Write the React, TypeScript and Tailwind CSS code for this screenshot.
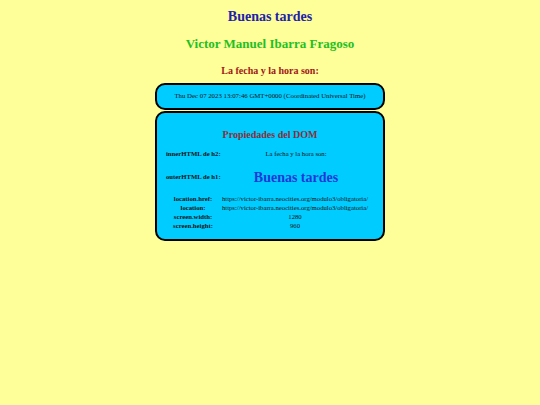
export default function App() {
  const rows = [
    ["location.href:", "https://victor-ibarra.neocities.org/modulo3/obligatoria/"],
    ["location:", "https://victor-ibarra.neocities.org/modulo3/obligatoria/"],
    ["screen.width:", "1280"],
    ["screen.height:", "960"],
  ];

  return (
    <div className="min-h-[405px] w-full bg-[#ffff99] flex flex-col items-center pt-[9px] text-[#111] font-['Liberation_Serif',serif]">
      <h1 className="text-[14px] leading-[16px] font-bold text-[#2222aa]">Buenas tardes</h1>
      <h2 className="mt-[11px] text-[13px] leading-[16px] font-bold text-[#22c022]">
        Victor Manuel Ibarra Fragoso
      </h2>
      <h3 className="mt-[13px] text-[10px] leading-[12px] font-bold text-[#a01818]">
        La fecha y la hora son:
      </h3>

      <div className="mt-[6px] w-[230px] h-[27px] rounded-[10px] border-2 border-black bg-[#00ccff] flex items-center justify-center text-[6.8px]">
        Thu Dec 07 2023 13:07:46 GMT+0000 (Coordinated Universal Time)
      </div>

      <div className="mt-px w-[230px] h-[130px] rounded-[10px] border-2 border-black bg-[#00ccff] flex flex-col pt-[16px] px-[9px]">
        <h3 className="text-center text-[10px] leading-[12px] font-bold text-[#8a2f3a]">
          Propiedades del DOM
        </h3>

        <div className="mt-[6px] grid grid-cols-[56px_148px] text-[6.7px]">
          <div className="h-[14px] flex items-center font-bold">innerHTML de h2:</div>
          <div className="h-[14px] flex items-center justify-center">La fecha y la hora son:</div>
          <div className="h-[32px] flex items-center font-bold">outerHTML de h1:</div>
          <div className="h-[32px] flex items-center justify-center text-[14px] font-bold text-[#1c3ad8]">
            Buenas tardes
          </div>
        </div>

        <div className="mt-px grid grid-cols-[54px_150px] text-[6.7px] leading-[9px]">
          {rows.map(([k, v]) => (
            <div key={k} className="contents">
              <div className="text-center font-bold">{k}</div>
              <div className="text-center">{v}</div>
            </div>
          ))}
        </div>
      </div>
    </div>
  );
}
